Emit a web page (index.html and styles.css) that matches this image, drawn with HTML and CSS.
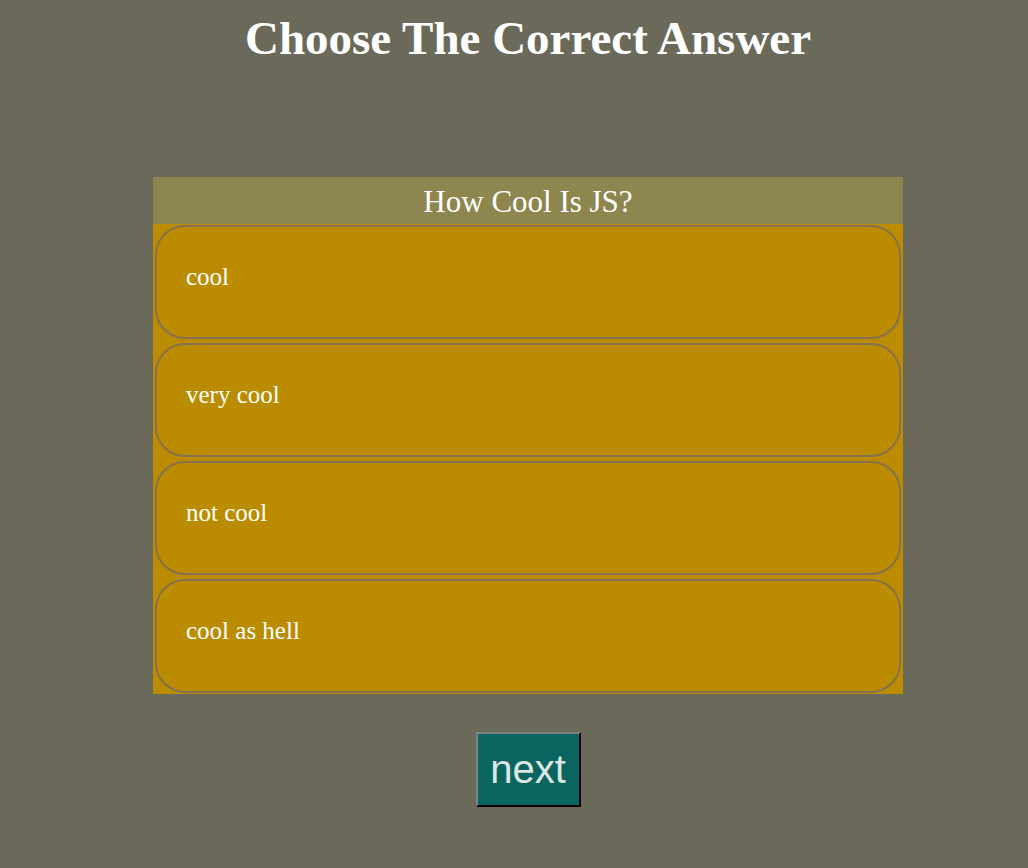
FILE: index.html
```html
<!DOCTYPE html>
<html>
<head>
<meta charset="utf-8">
<link rel="stylesheet" href="styles.css">
</head>
<body>
<h1 class="title">Choose The Correct Answer</h1>
<div class="quiz">
  <div class="question">How Cool Is JS?</div>
  <div class="options">
    <div class="option">cool</div>
    <div class="option">very cool</div>
    <div class="option">not cool</div>
    <div class="option">cool as hell</div>
  </div>
</div>
<div class="actions">
  <button class="next">next</button>
</div>
</body>
</html>
```
FILE: styles.css
```css
html, body {
  margin: 0;
  padding: 0;
}
body {
  background: #6b6a5a;
  font-family: "Liberation Serif", "Times New Roman", serif;
  color: #ffffff;
  min-height: 868px;
  padding-left: 28px;
}
.title {
  margin: 0;
  padding-top: 11px;
  text-align: center;
  font-size: 47px;
  font-weight: bold;
  line-height: 54px;
}
.quiz {
  width: 750px;
  margin: 112px auto 0;
  background: #bb8c00;
}
.question {
  height: 47px;
  background: #8e864f;
  text-align: center;
  font-size: 31px;
  line-height: 50px;
}
.options {
  display: flex;
  flex-direction: column;
  gap: 4px;
  padding: 1px 2px;
}
.option {
  height: 114px;
  box-sizing: border-box;
  border: 2px solid #86704f;
  border-radius: 30px;
  padding: 36px 29px 0;
  font-size: 25px;
}
.actions {
  display: flex;
  justify-content: center;
  margin-top: 38px;
}
.next {
  width: 105px;
  height: 75px;
  background: #0a6561;
  color: #dce6e2;
  font-family: "Liberation Sans", Arial, sans-serif;
  font-size: 40px;
  border: 2px outset #5f7573;
  border-color: #7a8482 #1c2624 #1c2624 #7a8482;
  padding: 0;
}
```
